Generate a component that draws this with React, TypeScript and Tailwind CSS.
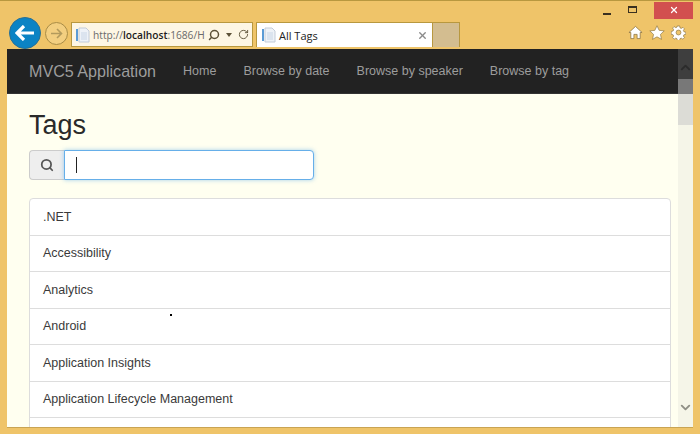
import { ChevronDown, ChevronUp, RotateCw, Search, X } from 'lucide-react'

const TAGS = ['.NET', 'Accessibility', 'Analytics', 'Android', 'Application Insights', 'Application Lifecycle Management', '']
const NAV = ['Home', 'Browse by date', 'Browse by speaker', 'Browse by tag']

function PageIcon() {
  return (
    <svg width="14" height="16" viewBox="0 0 14 16" className="shrink-0">
      <rect x="0" y="2" width="2" height="12" fill="#5b9bd5" />
      <path d="M3 1h7l3 3v11H3z" fill="#eef2f7" stroke="#c3ccd8" />
      <path d="M5 6h6M5 8h6M5 10h6M5 12h6" stroke="#c9d6e6" />
    </svg>
  )
}

function ToolbarIcons() {
  return (
    <div className="flex items-center gap-[6px] pr-[14px]">
      <svg width="15" height="15" viewBox="0 0 16 16">
        <path d="M8 1.500 15 8h-2v6.500H9.700V10H6.300v4.500H3V8H1z" fill="#fff" stroke="#8a7240" strokeWidth="0.8" />
      </svg>
      <svg width="16" height="15" viewBox="0 0 17 16">
        <path d="m8.500.8 2.300 4.900 5.400.6-4 3.700 1.100 5.300-4.800-2.700-4.800 2.700 1.100-5.300-4-3.700 5.400-.6z" fill="#fff" stroke="#8a7240" strokeWidth="0.7" />
      </svg>
      <svg width="15" height="15" viewBox="0 0 16 16">
        <path
          d="M6.800 1h2.400l.4 2 1.300.6 1.800-1.100 1.600 1.600-1.100 1.800.6 1.300 2 .4v2.400l-2 .4-.6 1.300 1.100 1.800-1.600 1.600-1.800-1.100-1.300.6-.4 2H6.800l-.4-2-1.300-.6-1.800 1.100-1.600-1.600 1.100-1.800-.6-1.300-2-.4V6.800l2-.4.6-1.300-1.100-1.800 1.600-1.600 1.800 1.100 1.300-.6z"
          fill="#fff"
          stroke="#8a7240"
          strokeWidth="0.7"
        />
        <circle cx="8" cy="8" r="2.600" fill="#efc469" stroke="#8a7240" strokeWidth="0.7" />
      </svg>
    </div>
  )
}

function BrowserChrome() {
  return (
    <div className="h-[49px] shrink-0 flex flex-col border-t border-[#b8983f] font-['Open_Sans',sans-serif]">
      {/* window buttons */}
      <div className="h-[23px] flex justify-end pr-[7px]">
        <div className="flex items-center h-[18px] gap-[17px]">
          <div className="w-[8px] h-[2px] mt-[7px] bg-[#3a3020]" />
          <div className="w-[9px] h-[7px] mb-[2px] border border-[#3a3020] border-t-2" />
          <div className="w-[39px] h-[17px] bg-[#d2504f] flex items-center justify-center">
            <X size={10} strokeWidth={3} color="#fff" />
          </div>
        </div>
      </div>

      {/* address bar, tabs, tools */}
      <div className="relative flex-1 flex items-start pl-[9px]">
        <div className="relative z-10 w-[32px] h-[32px] -mt-[5px] rounded-full bg-[#0b83c4] border border-[#2a6f93] flex items-center justify-center shrink-0">
          <svg width="20" height="16" viewBox="0 0 20 16">
            <path d="M9 1 2 8l7 7M2 8h17" fill="none" stroke="#fff" strokeWidth="3.200" />
          </svg>
        </div>
        <div className="w-[23px] h-[23px] ml-[4px] rounded-full bg-[#f3cf80] border border-[#a98c45] flex items-center justify-center shrink-0">
          <svg width="13" height="11" viewBox="0 0 13 11">
            <path d="M7 1l4.500 4.500L7 10M11 5.500H1" fill="none" stroke="#b39a5c" strokeWidth="1.600" />
          </svg>
        </div>
        <div className="ml-[3px] w-[182px] h-[25px] bg-[#fdf6e4] border border-[#b8983f] flex items-center pl-[4px] gap-[3px] shrink-0">
          <PageIcon />
          <span className="pt-[2px] text-[10.2px] text-[#6a6a6a] whitespace-nowrap">
            http://<span className="text-[#1c1c1c] font-semibold">localhost</span>:1686/H
          </span>
          <Search size={12} strokeWidth={3} color="#5d5238" className="-scale-x-100 shrink-0" />
          <svg width="6" height="4" viewBox="0 0 6 4" className="ml-[3px] shrink-0">
            <path d="M0 0h6L3 4z" fill="#5d5238" />
          </svg>
          <RotateCw size={11} strokeWidth={2} color="#5d5238" className="ml-[3px] shrink-0" />
        </div>
        <div className="ml-[3px] w-[177px] h-[25px] bg-white border-t border-x border-[#b8983f] flex items-center pl-[5px] shrink-0">
          <PageIcon />
          <span className="ml-[3px] pt-[3px] text-[11px] text-[#222]">All Tags</span>
          <X size={11} strokeWidth={3} color="#8a8a8a" className="ml-auto mr-[4px]" />
        </div>
        <div className="w-[27px] h-[25px] bg-[#d3bd90] border-t border-r border-[#b8983f] shrink-0" />
        <div className="ml-auto mt-[3px]">
          <ToolbarIcons />
        </div>
      </div>
    </div>
  )
}

function TagList() {
  return (
    <div className="mt-[18px] bg-white border border-[#ddd] rounded-t-[4px]">
      {TAGS.map((tag, i) => (
        <div
          key={i}
          className="h-[36.5px] flex items-center pl-[13px] pt-[1px] text-[12.5px] text-[#3a3a3a] border-b border-[#ddd] last:border-b-0"
        >
          {tag}
        </div>
      ))}
    </div>
  )
}

function Scrollbar() {
  return (
    <div className="w-[15px] shrink-0 flex flex-col bg-[#f5f5e8]">
      <div className="h-[30px] bg-[#3e3e3e] flex justify-center pt-[11px]">
        <ChevronUp size={15} strokeWidth={3} color="#2b2b2b" />
      </div>
      <div className="h-[15px] bg-[#787878]" />
      <div className="h-[31px] bg-[#dcdcd6]" />
      <div className="flex-1 flex items-end justify-center pb-[12px]">
        <ChevronDown size={15} strokeWidth={3} color="#8f8f86" />
      </div>
    </div>
  )
}

export default function App() {
  return (
    <div className="w-[700px] h-[434px] bg-[#efc469] flex flex-col overflow-hidden font-['Liberation_Sans',Arial,sans-serif]">
      <BrowserChrome />

      <div className="relative z-20 flex-1 min-h-0 mx-[7px] flex border-b border-[#c9a453] overflow-hidden">
        <div className="flex-1 min-w-0 bg-[#fffff0] flex flex-col">
          <div className="h-[45px] shrink-0 bg-[#222] flex items-center pl-[22px] pt-px border-b border-[#333]">
            <span className="text-[16.1px] text-[#9d9d9d] mr-[27px]">MVC5 Application</span>
            <div className="flex gap-[27px] text-[12.5px] text-[#9d9d9d]">
              {NAV.map((item) => (
                <span key={item}>{item}</span>
              ))}
            </div>
          </div>

          <div className="relative pl-[22px] pr-[7px] pt-[15px]">
            <h1 className="text-[27px] leading-[32px] text-[#2a2a2a]">Tags</h1>
            <div className="mt-[9px] flex h-[30px] w-[285px]">
              <div className="w-[35px] bg-[#eee] border border-r-0 border-[#ccc] rounded-l-[4px] flex items-center justify-center">
                <Search size={14} strokeWidth={3} color="#555" />
              </div>
              <div className="flex-1 bg-white border border-[#66afe9] rounded-r-[4px] shadow-[0_0_4px_rgba(102,175,233,0.6)] flex items-center pl-[11px]">
                <div className="w-px h-[16px] bg-[#222]" />
              </div>
            </div>
            <TagList />
            <div className="absolute left-[163px] top-[220px] w-[2px] h-[2px] bg-black" />
          </div>
        </div>
        <Scrollbar />
      </div>
      <div className="h-[6px] shrink-0" />
    </div>
  )
}
